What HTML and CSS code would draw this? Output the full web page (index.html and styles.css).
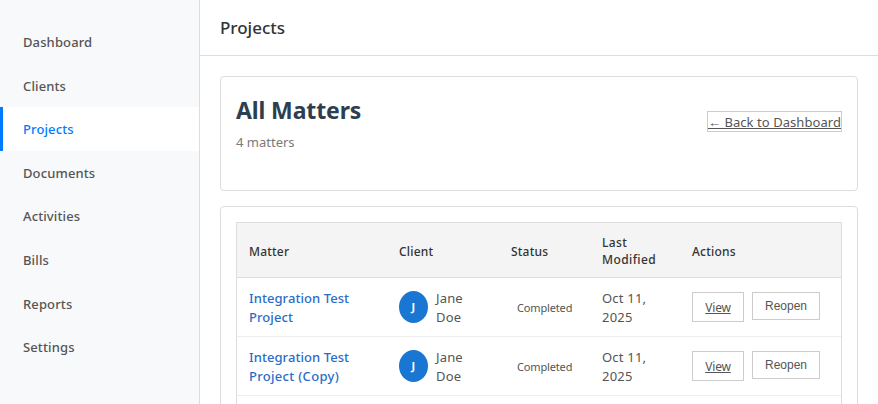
FILE: index.html
```html
<!DOCTYPE html>
<html lang="en">
<head>
<meta charset="utf-8">
<title>Projects</title>
<link rel="stylesheet" href="styles.css">
</head>
<body>
<div class="app">
  <nav class="sidebar">
    <a class="nav-item">Dashboard</a>
    <a class="nav-item">Clients</a>
    <a class="nav-item active">Projects</a>
    <a class="nav-item">Documents</a>
    <a class="nav-item">Activities</a>
    <a class="nav-item">Bills</a>
    <a class="nav-item">Reports</a>
    <a class="nav-item">Settings</a>
  </nav>
  <div class="main">
    <header class="topbar">Projects</header>
    <main class="content">
      <section class="card summary">
        <div>
          <h1>All Matters</h1>
          <p class="count">4 matters</p>
        </div>
        <a class="back">← Back to Dashboard</a>
      </section>
      <section class="card">
        <table class="matters">
          <colgroup><col class="c-matter"><col class="c-client"><col class="c-status"><col class="c-date"><col class="c-actions"></colgroup>
          <thead>
            <tr><th>Matter</th><th>Client</th><th>Status</th><th class="modified">Last<br>Modified</th><th>Actions</th></tr>
          </thead>
          <tbody>
            <tr>
              <td class="name">Integration Test<br>Project</td>
              <td><div class="client"><span class="avatar">J</span><span>Jane<br>Doe</span></div></td>
              <td><span class="status">Completed</span></td>
              <td class="date">Oct 11,<br>2025</td>
              <td><div class="actions"><a class="btn view">View</a><button class="btn reopen">Reopen</button></div></td>
            </tr>
            <tr>
              <td class="name">Integration Test<br><span class="copy">Project (Copy)</span></td>
              <td><div class="client"><span class="avatar">J</span><span>Jane<br>Doe</span></div></td>
              <td><span class="status">Completed</span></td>
              <td class="date">Oct 11,<br>2025</td>
              <td><div class="actions"><a class="btn view">View</a><button class="btn reopen">Reopen</button></div></td>
            </tr>
            <tr><td></td><td></td><td></td><td></td><td></td></tr>
          </tbody>
        </table>
      </section>
    </main>
  </div>
</div>
</body>
</html>
```
FILE: styles.css
```css
* { box-sizing: border-box; }
body {
  margin: 0;
  background: #fff;
  color: #555;
  font: 13px/19px "Noto Sans", "Open Sans", sans-serif;
}
.app { display: flex; height: 404px; overflow: hidden; }
.sidebar {
  width: 200px;
  flex: none;
  padding-top: 20px;
  background: #f8f9fb;
  border-right: 1px solid #ddd;
}
.nav-item {
  display: block;
  height: 43.6px;
  padding: 13px 20px 11px;
  border-left: 3px solid transparent;
  line-height: 19.6px;
  font-weight: 500;
  letter-spacing: 0.12px;
}
.nav-item.active { background: #fff; border-left-color: #007bff; color: #007bff; }
.main { flex: 1; min-width: 0; }
.topbar {
  height: 56px;
  padding: 15px 20px;
  border-bottom: 1px solid #ddd;
  color: #333;
  font-size: 17px;
  line-height: 25px;
  font-weight: 500;
}
.content { padding: 20px; }
.card {
  margin-bottom: 15px;
  padding: 15px;
  border: 1px solid #ddd;
  border-radius: 4px;
}
.summary { display: flex; justify-content: space-between; align-items: flex-start; height: 115px; }
h1 { margin: 2px 0 7px; color: #2c3e50; font-size: 23px; line-height: 32px; font-weight: 700; letter-spacing: -0.12px; }
.count { margin: 0; color: #7a7a7a; }
.back {
  display: block;
  margin-top: 19px;
  height: 21px;
  border: 1px solid #ccc;
  line-height: 20px;
  letter-spacing: 0.06px;
  text-decoration: underline;
  text-underline-offset: 1px;
}
.matters {
  width: 606px;
  table-layout: fixed;
  border-collapse: separate;
  border-spacing: 0;
  border: 1px solid #ddd;
}
.c-matter { width: 150px; }
.c-client { width: 112px; }
.c-status { width: 91px; }
.c-date { width: 90px; }
.c-actions { width: 161px; }
th {
  height: 55px;
  padding: 2px 12px 0;
  background: #f4f4f4;
  border-bottom: 1px solid #ddd;
  color: #333;
  text-align: left;
  font-size: 12px;
  line-height: 17px;
  font-weight: 500;
  letter-spacing: 0.2px;
}
.modified { letter-spacing: 0.4px; }
td { height: 59px; padding: 1px 12px 0; border-bottom: 1px solid #eee; white-space: nowrap; }
.name { color: #2a6dc9; font-weight: 500; letter-spacing: 0.07px; }
.copy { letter-spacing: 0.3px; }
.date { letter-spacing: 0.2px; }
.client { display: flex; align-items: flex-start; gap: 8px; letter-spacing: 0.15px; }
.avatar {
  width: 29px;
  height: 32px;
  margin-top: 2px;
  border-radius: 50%;
  background: #1976d2;
  color: #fff;
  text-align: center;
  font-size: 11px;
  line-height: 32px;
  font-weight: 700;
}
.status { display: block; padding: 0 0 1px 6px; font-size: 11px; line-height: 15px; letter-spacing: -0.15px; }
.actions { display: flex; align-items: flex-start; gap: 8px; padding-bottom: 2px; }
.btn { border: 1px solid #ccc; background: #fff; color: #555; padding: 0; text-align: center; }
.view { width: 52px; height: 30px; font-size: 12px; line-height: 30px; letter-spacing: -0.2px; text-decoration: underline; }
.reopen { width: 68px; height: 28px; font: 12px/26px "Liberation Sans", sans-serif; }
```
